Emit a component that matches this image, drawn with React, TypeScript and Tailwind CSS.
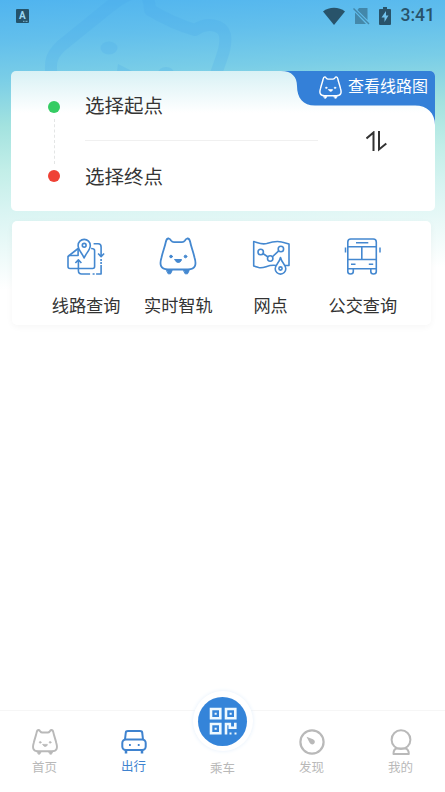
import type { ReactNode } from 'react';

function CatIcon({ className, strokeWidth = 1.8 }: { className?: string; strokeWidth?: number }) {
  return (
    <svg viewBox="0 0 38 38" className={className} fill="none" stroke="currentColor" strokeWidth={strokeWidth} strokeLinecap="round" strokeLinejoin="round">
      <path d="M6.800 5Q7.500 1.200 9.800 1.500Q11 1.800 12 3.500Q13.200 5.200 15 5.200H23Q24.800 5.200 26 3.500Q27 1.800 28.200 1.500Q30.500 1.200 31.200 5C32.200 10 34 14 35.500 20.500C37.500 27 37 32.500 29 32.500H9C1 32.500 0.500 27 2.500 20.500C4 14 5.800 10 6.800 5Z" />
      <path d="M7.800 33.500H13.200L11.500 36.800H9.500ZM24.800 33.500H30.200L28.500 36.800H26.500Z" fill="currentColor" strokeWidth="1" />
      <circle cx="12" cy="19.500" r="1.300" fill="currentColor" strokeWidth="1" />
      <circle cx="26.500" cy="19.500" r="1.300" fill="currentColor" strokeWidth="1" />
      <path d="M16 22.500H22.500C22 26.500 16.500 26.500 16 22.500Z" fill="currentColor" strokeWidth="1" />
    </svg>
  );
}

function RouteIcon() {
  return (
    <svg viewBox="0.9 0 38 38" className="size-[38px]" fill="none" stroke="currentColor" strokeWidth="1.600" strokeLinejoin="round">
      <path d="M12 11.500L1.900 19.500V29.500Q1.900 31.500 3.900 31.500H26.500Q28.500 31.500 28.500 29.500V13.500Q28.500 11.500 25 11.500" />
      <path d="M12 11.500V18.500H2.500" />
      <path d="M18 21C16 16 12 13 12 8.500A6.100 6.100 0 0 1 24.200 8.500C24.200 13 20 16 18 21Z" fill="white" />
      <circle cx="18.100" cy="8.300" r="1.900" />
      <path d="M12.300 22.800V33.500Q12.300 37 15.500 37H24M9.300 26L12.300 22.800L15.300 26" />
      <path d="M27.500 6.800H32Q35 6.800 35 10V19M32 16.500L35 19.700L38 16.500" />
      <path d="M35 22V30" strokeDasharray="2 1" />
      <path d="M35 30V37H30M28.500 37H26.500" />
    </svg>
  );
}

function MapIcon() {
  return (
    <svg viewBox="0.3 0 38 38" className="size-[38px]" fill="none" stroke="currentColor" strokeWidth="1.600" strokeLinejoin="round">
      <path d="M24.500 28.500C16 27 13 32 7 30.500L2 29V4.500C7 6 10 8 15 6.500C21 4.500 25 3.500 30 5L37.300 7V28.500H33" />
      <circle cx="9" cy="15" r="2.700" />
      <circle cx="18.500" cy="21.500" r="2.700" />
      <circle cx="29.200" cy="12" r="2.700" />
      <path d="M11.200 16.500L16.400 20M20.500 20L27 13.800" />
      <path d="M28.800 20.500C27.500 26 23.500 27.500 23.500 31.800A5.300 5.300 0 0 0 34.100 31.800C34.100 27.500 30 26 28.800 20.500Z" fill="white" />
      <circle cx="28.800" cy="31.500" r="1.600" />
    </svg>
  );
}

function BusIcon() {
  return (
    <svg viewBox="0 0 38 38" className="size-[38px]" fill="none" stroke="currentColor" strokeWidth="1.600" strokeLinejoin="round">
      <path d="M3.800 31.700V5Q3.800 2 6.800 2H29.300Q32.300 2 32.300 5V31.700ZM3.800 9.700H32.300M3.800 22.500H32.300M17.800 9.700V22.500M12 5.700H24.300" />
      <path d="M7 27.200H11.500M24.800 27.200H29.200" />
      <path d="M3.800 32V34.500Q3.800 37 6.500 37Q9.300 37 9.300 34.500V32M26.800 32V34.500Q26.800 37 29.500 37Q32.300 37 32.300 34.500V32" />
      <path d="M1.500 10.500V15.500M36 10.500V15.500" strokeWidth="1.500" />
    </svg>
  );
}

function CarIcon() {
  return (
    <svg viewBox="0 0 26 26" className="size-[26px]" fill="none" stroke="currentColor" strokeWidth="2" strokeLinejoin="round">
      <path d="M4 10.500L4.800 3.500Q5 2 7 2H19Q21 2 21.200 3.500L22 10.500" />
      <rect x="1.300" y="10.500" width="23.400" height="10.500" rx="3.500" />
      <path d="M5 21V24.500M21 21V24.500" strokeWidth="2.500" />
      <path d="M8 16H9.800M16.800 16H18.600" strokeWidth="2" />
    </svg>
  );
}

function CompassIcon() {
  return (
    <svg viewBox="0 0 26 26" className="size-[26px]" fill="none" stroke="currentColor" strokeWidth="2.200">
      <circle cx="13" cy="13" r="11.600" />
      <path d="M7.500 7.800L14 10.200C16.300 11.500 16.200 13.500 15 14.800C13.500 16 11.600 15.300 10.500 13.500Z" fill="currentColor" stroke="none" />
    </svg>
  );
}

function PersonIcon() {
  return (
    <svg viewBox="0 0 26 26" className="size-[26px]" fill="none" stroke="currentColor" strokeWidth="2" strokeLinejoin="round">
      <circle cx="13" cy="10.700" r="9.400" />
      <path d="M8.500 19.500C6.500 20 5.500 21.500 5.500 25H20.800C20.800 21.500 19.500 20 17.500 19.500Z" />
    </svg>
  );
}

function QrIcon() {
  return (
    <svg viewBox="0 0 28 28" className="size-7" fill="none" stroke="currentColor" strokeWidth="2.600">
      <path d="M2 2H11.300V11.300H2ZM17 2H26.300V11.300H17ZM2 17H11.300V26.300H2Z" />
      <path d="M17 27.500V17H20.800V20.800H26.300V15.700" />
      <path d="M5.600 6.700H7.700M20.600 6.700H22.700M5.600 21.700H7.700M20.500 26.500H22.500M25.500 26.500H27.500" strokeWidth="2" />
    </svg>
  );
}

function StatusBar() {
  return (
    <div className="relative flex h-[31px] items-center justify-between pr-[10px] pl-4 text-[#28536a]">
      <svg viewBox="0 0 13 14" className="h-[14px] w-[13px]">
        <rect width="13" height="14" rx="1" fill="#24536b" />
        <text x="6.300" y="10" textAnchor="middle" className="font-[Roboto] text-[10px] font-bold" fill="#9ad7f2">A</text>
        <path d="M7 12.300H12" stroke="#9ad7f2" strokeWidth="0.800" strokeDasharray="1 0.500" />
      </svg>
      <div className="flex items-center">
        <svg viewBox="0 0 22 18" className="h-[18px] w-[22px]" fill="currentColor">
          <path d="M0 4.500C6 -0.500 16 -0.500 22 4.500L11 18Z" />
        </svg>
        <svg viewBox="0 0 17 18" className="ml-2 h-[18px] w-[17px] opacity-50" fill="currentColor">
          <path d="M6 1H14.500V13L4.500 3ZM2 5.500L13 17H2Z" />
          <path d="M0.500 1.500L16 17" stroke="currentColor" strokeWidth="1.500" />
        </svg>
        <svg viewBox="0 0 12 18" className="ml-[9px] h-[18px] w-3">
          <path d="M4 0H8V2H11Q12 2 12 3V17Q12 18 11 18H1Q0 18 0 17V3Q0 2 1 2H4Z" fill="currentColor" />
          <path d="M7 4L2.500 10.500H5.500V15L9.500 8.500H7Z" fill="#70c2ec" />
        </svg>
        <span className="mt-px ml-[10px] font-[Roboto] text-[17.500px] leading-none font-medium">3:41</span>
      </div>
    </div>
  );
}

function Watermark() {
  return (
    <svg viewBox="0 0 250 80" className="absolute top-0 left-0 h-20 w-[250px] text-[#45a6ea] opacity-20" fill="none" stroke="currentColor" strokeWidth="12" strokeLinejoin="round">
      <path d="M52 80C49 60 52 55 61 46L108 8C120 -2 132 -8 139 -8Q149 -9 150 10Q174 24 195 30C207 22 222 24 225 35C227 49 220 60 214 80" />
      <ellipse cx="109" cy="48" rx="8.500" ry="6.500" fill="currentColor" stroke="none" />
      <ellipse cx="166" cy="73" rx="8" ry="6" fill="currentColor" stroke="none" />
      <path d="M118 64L136 73L116 78Z" fill="currentColor" stroke="none" />
    </svg>
  );
}

function TripCard() {
  return (
    <section className="relative mt-10 mr-[10px] ml-[11px] flex h-[140px] overflow-hidden rounded-[5px] bg-linear-to-b from-[#d8f1f5] to-white to-30%">
      <svg viewBox="0 0 424 56" className="absolute top-0 left-0 h-14 w-[424px]">
        <path d="M270 0C281 0 286 6 286 15C286 27 292 34.500 304 34.500H404C416 34.500 424 42 424 54V0Z" fill="#3480d8" />
      </svg>
      <div className="absolute top-0 right-[7px] flex h-8 items-center text-white">
        <CatIcon className="mr-[6px] size-[23px]" strokeWidth={2.4} />
        <span className="text-[16px] leading-none">查看线路图</span>
      </div>
      <div className="ml-[37px] flex w-3 flex-col items-center pt-[29.500px]">
        <i className="size-3 rounded-full bg-[#34cc63]" />
        <i className="my-[6px] h-[45px] border-l border-dashed border-[#e3e5e5]" />
        <i className="size-3 rounded-full bg-[#ef4135]" />
      </div>
      <div className="ml-[25px] w-[233px] text-[19.5px] leading-none text-[#353535]">
        <p className="flex h-[70px] items-center border-b border-[#f0f0f0] pt-[3px]">选择起点</p>
        <p className="flex h-[70px] items-center pt-[3px]">选择终点</p>
      </div>
      <svg viewBox="0 0 22 22" className="mt-[60px] ml-[48px] size-[22px]" fill="none" stroke="#333" strokeWidth="2">
        <path d="M0.500 7.500L7.500 1.500V20M13 0V18.500L20.300 12.500" />
      </svg>
    </section>
  );
}

const services = [
  { label: '线路查询', icon: <RouteIcon /> },
  { label: '实时智轨', icon: <CatIcon className="size-[38px]" /> },
  { label: '网点', icon: <MapIcon /> },
  { label: '公交查询', icon: <BusIcon /> },
];

function Services() {
  return (
    <section className="mt-[10px] mr-[14px] ml-3 grid h-[104px] grid-cols-4 rounded-[5px] bg-white pr-[22px] pl-7 shadow-[0_2px_7px_rgba(0,0,0,0.04)]">
      {services.map((item) => (
        <div key={item.label} className="flex flex-col items-center pt-4 text-[#4488d0]">
          {item.icon}
          <span className="mt-[23px] text-[17.200px] leading-none whitespace-nowrap text-[#333]">{item.label}</span>
        </div>
      ))}
    </section>
  );
}

function NavItem({ label, icon, active = false }: { label: string; icon: ReactNode; active?: boolean }) {
  return (
    <div className={`flex flex-1 flex-col items-center pt-[18px] ${active ? 'text-[#3f83cf]' : 'text-[#b9b9b9]'}`}>
      {icon}
      <span className={`text-[12.500px] leading-none ${active ? 'mt-[6px]' : 'mt-[7px]'}`}>{label}</span>
    </div>
  );
}

export default function App() {
  return (
    <main className="relative flex h-[792px] w-[445px] flex-col overflow-hidden bg-white bg-[linear-gradient(177deg,#50b4ef_0px,#62bfec_40px,#79cde7_78px,#a2e2df_125px,#c2eee8_170px,#d8f4f2_210px,#ffffff_290px)] font-['Liberation_Sans','Noto_Sans_CJK_SC',sans-serif]">
      <Watermark />
      <StatusBar />
      <TripCard />
      <Services />
      <nav className="mt-auto flex h-[82px] border-t border-[#f6f6f6] bg-white">
        <NavItem label="首页" icon={<CatIcon className="size-[26px]" strokeWidth={2.8} />} />
        <NavItem label="出行" icon={<CarIcon />} active />
        <div className="flex flex-1 flex-col items-center text-[#b9b9b9]">
          <div className="-mt-[20px] flex size-[60px] shrink-0 items-center justify-center rounded-full bg-white shadow-[0_0_4px_#e4effb]">
            <div className="flex size-[49px] items-center justify-center rounded-full bg-[#3484d9] text-[#eef9ff]">
              <QrIcon />
            </div>
          </div>
          <span className="mt-[12px] text-[12.500px] leading-none">乘车</span>
        </div>
        <NavItem label="发现" icon={<CompassIcon />} />
        <NavItem label="我的" icon={<PersonIcon />} />
      </nav>
    </main>
  );
}
